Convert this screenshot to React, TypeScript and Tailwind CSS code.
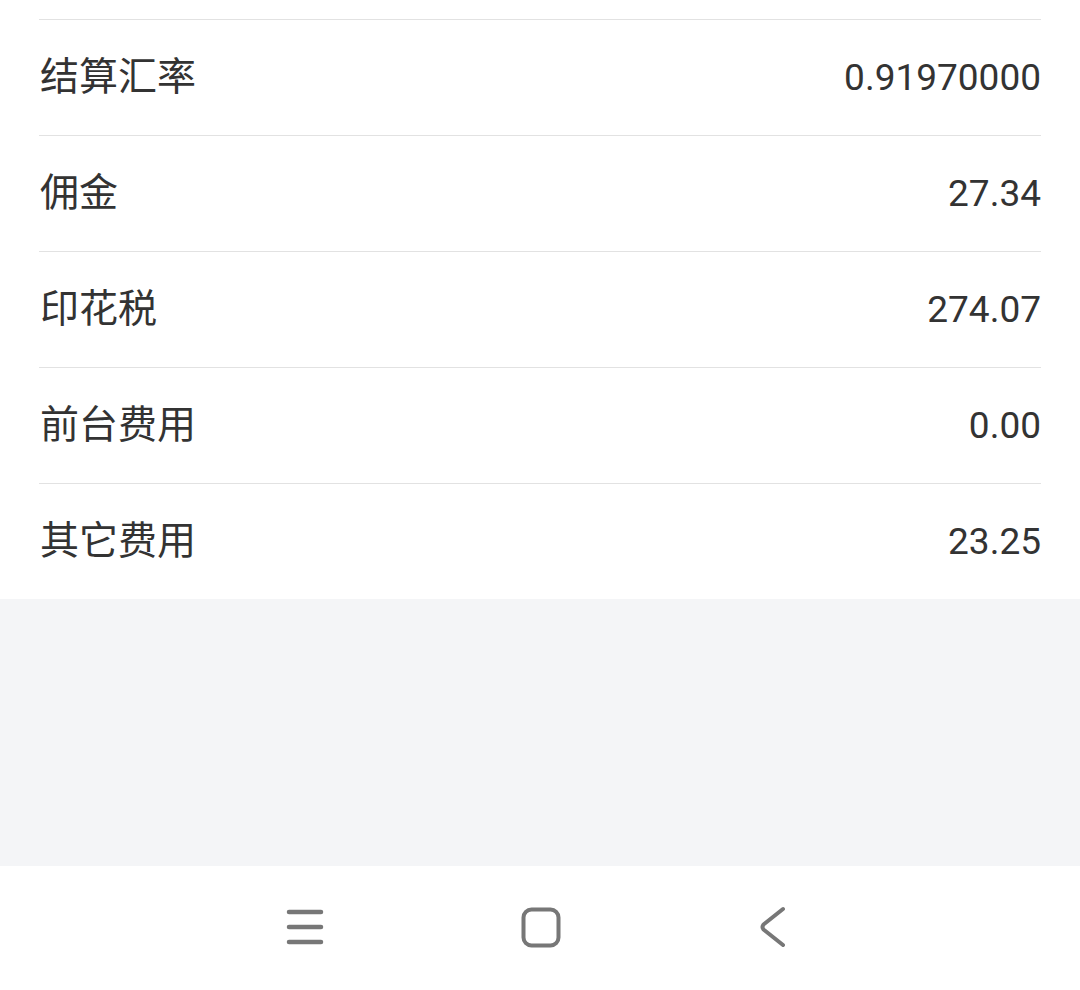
import React from "react";

const rows = [
  { label: "结算汇率", value: "0.91970000" },
  { label: "佣金", value: "27.34" },
  { label: "印花税", value: "274.07" },
  { label: "前台费用", value: "0.00" },
  { label: "其它费用", value: "23.25" },
];

export default function App() {
  return (
    <div
      className="w-[1080px] h-[990px] flex flex-col bg-[#f4f5f7] overflow-hidden"
      style={{ fontFamily: 'Roboto, "Noto Sans CJK SC", sans-serif' }}
    >
      <div className="bg-white px-[39px] pt-[19px]">
        {rows.map((r) => (
          <div
            key={r.label}
            className="flex items-center justify-between border-t border-[#e2e2e2] h-[116px]"
          >
            <span className="text-[39px] text-[#333333] leading-none ml-[1px]">{r.label}</span>
            <span className="text-[37px] text-[#333333] leading-none">{r.value}</span>
          </div>
        ))}
      </div>
      <div className="flex-1" />
      <div className="h-[124px] bg-white flex items-center justify-center">
        <div className="flex items-center justify-between w-[502px] ml-[-7px] mt-[-2px]">
          <svg width="38" height="36" viewBox="0 0 38 36">
            <g stroke="#777" strokeWidth="4.5" strokeLinecap="round">
              <line x1="3" y1="3" x2="35" y2="3" />
              <line x1="3" y1="18" x2="35" y2="18" />
              <line x1="3" y1="33" x2="35" y2="33" />
            </g>
          </svg>
          <svg width="40" height="41" viewBox="0 0 40 41">
            <rect x="2.5" y="2.5" width="35" height="36" rx="8" fill="none" stroke="#777" strokeWidth="4" />
          </svg>
          <svg width="30" height="42" viewBox="0 0 30 42">
            <path d="M25 3 L5.5 18.5 Q3.5 21 5.5 23.5 L25 39" fill="none" stroke="#777" strokeWidth="4" strokeLinecap="round" strokeLinejoin="round" />
          </svg>
        </div>
      </div>
    </div>
  );
}
